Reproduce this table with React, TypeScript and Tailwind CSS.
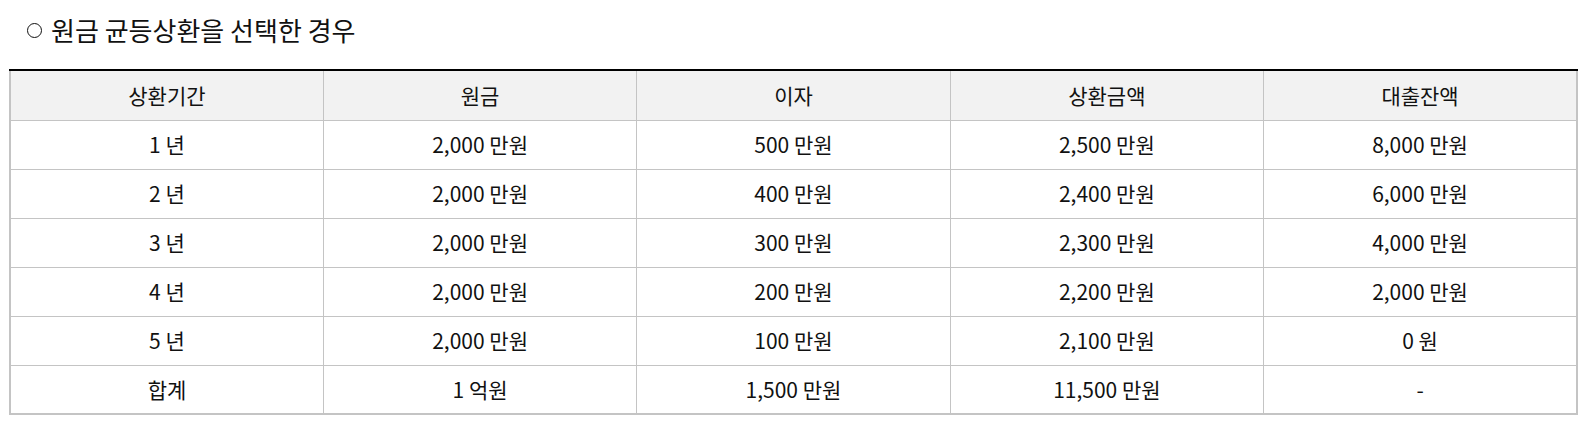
import React from 'react';

const rows = [
  ['1 년', '2,000 만원', '500 만원', '2,500 만원', '8,000 만원'],
  ['2 년', '2,000 만원', '400 만원', '2,400 만원', '6,000 만원'],
  ['3 년', '2,000 만원', '300 만원', '2,300 만원', '4,000 만원'],
  ['4 년', '2,000 만원', '200 만원', '2,200 만원', '2,000 만원'],
  ['5 년', '2,000 만원', '100 만원', '2,100 만원', '0 원'],
  ['합계', '1 억원', '1,500 만원', '11,500 만원', '-'],
];

const heads = ['상환기간', '원금', '이자', '상환금액', '대출잔액'];

export default function App() {
  return (
    <div className="min-h-[430px] bg-white px-[9px] pt-[10px] font-['Noto_Sans_CJK_KR','Noto_Sans',sans-serif] text-[#111]">
      <h2 className="flex items-center pl-[18px] text-[26px] leading-[40px] font-normal">
        <span className="mr-[9px] inline-block h-[15px] w-[15px] rounded-full border-[1.5px] border-[#111]" />
        원금 균등상환을 선택한 경우
      </h2>
      <table className="mt-[19px] w-[1569px] table-fixed border-collapse border-2 border-[#c4c4c4] text-[21px]">
        <thead>
          <tr className="h-[50px] bg-[#f2f2f2]">
            {heads.map((h) => (
              <th key={h} className="border border-[#c4c4c4] border-t-2 border-t-black text-center font-normal">
                {h}
              </th>
            ))}
          </tr>
        </thead>
        <tbody>
          {rows.map((r, i) => (
            <tr key={i} className="h-[49px]">
              {r.map((c, j) => (
                <td key={j} className="border border-[#c4c4c4] text-center">
                  {c}
                </td>
              ))}
            </tr>
          ))}
        </tbody>
      </table>
    </div>
  );
}
